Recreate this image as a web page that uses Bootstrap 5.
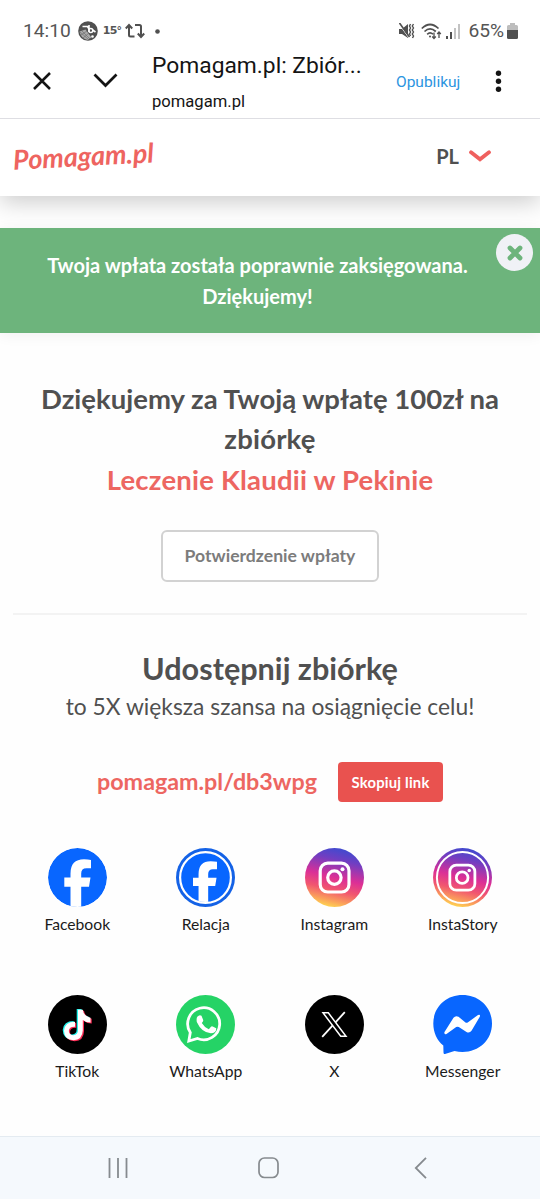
<!DOCTYPE html>
<html lang="pl">
<head>
<meta charset="utf-8">
<meta name="viewport" content="width=device-width, initial-scale=1">
<title>Pomagam.pl: Zbiórka</title>
<link href="https://cdn.jsdelivr.net/npm/bootstrap@5.3.0/dist/css/bootstrap.min.css" rel="stylesheet">
<style>
body{font-family:Lato,sans-serif;color:#505050;background:#fefefe;height:1199px;overflow:hidden}
body>*{flex-shrink:0}
svg{display:block;flex:none}
.phone-ui{font-family:Roboto,sans-serif;z-index:2}
.status{height:49px;padding:14px 22px 0 23px;color:#555;font-size:19.2px;line-height:34px}
.status .temp{font:700 11px/30px "DejaVu Sans",sans-serif;letter-spacing:-.8px}
.appbar{height:70px;padding:0 38px 0 32px;border-bottom:1px solid #dedee3;color:#141414}
.page-title{font-size:22.8px;line-height:30px;width:214px;padding-top:2px}
.page-host{font-size:16.6px;line-height:22px}
.publish{color:#2c95df;font-size:15.500px;line-height:20px}
.site-head{height:77px;padding:0 49px 3px 13px;box-shadow:0 6px 22px rgba(0,0,0,.2);background:#fff;position:relative}
.wordmark{font:italic 700 27px/40px Lato,sans-serif;color:#ee6460;transform:rotate(-3deg)}
.lang{font-size:20px}
.notice{margin-top:32px;height:104.500px;background:#6db47c;color:#fff;font-size:20px;line-height:31.5px;padding:21.500px 25px 0 0;box-shadow:0 2px 14px rgba(0,0,0,.06)}
.notice-x{right:7px;top:6px;width:37px;height:37px;background:#f0f1f6}
.thanks{font-size:27.5px;line-height:40.5px;padding-top:46px}
.h1b,.h1c{letter-spacing:.2px}
.coral{color:#ed6661}
.receipt{width:218px;height:52px;margin-top:30px;border:2px solid #d2d2d2;border-radius:6px;color:#7c7c7c;font-size:17.6px;background:#fff}
.sep{margin:31px 13px 0;height:2px;background:#f3f3f3}
.share-h{font-size:30.6px;line-height:40px;margin-top:34px}
.share-p{font-size:22.8px;line-height:34px}
.link-row{margin-top:39px;height:40px;padding-left:97px;gap:21px}
.short{font-size:23.3px;width:220px;line-height:39px}
.copy{width:105px;height:40px;background:#e9524f;border-radius:4px;font-size:14.8px;letter-spacing:.2px;color:#fff}
.shares{padding:0 13px;margin-top:45.500px}
.share-item{height:147px;color:#1b1b1b;font-size:15.7px;line-height:22px}
.share-item:nth-child(n+5){height:138px}
.share-item svg{margin-bottom:6px}
.sysnav{height:63px;background:#f5f9fd;border-top:1px solid #e4ebf1}
.t{white-space:nowrap}
</style>
</head>
<body class="d-flex flex-column">

<header class="phone-ui bg-white position-relative">
  <div class="status d-flex align-items-start justify-content-between">
    <div class="d-flex align-items-center">
      <span class="t">14:10</span>
      <svg style="margin-left:7px" width="20" height="20" viewBox="0 0 20 20"><circle cx="10" cy="10" r="9.8" fill="#505050"/><path d="M1.500 10.500l6-2 6 8-4 2.500q-7-2-8-8.500z" fill="#aaa"/><path d="M2 11l8 7M4 10l8 8M3 14l6-4M5 17l6-5" stroke="#666" stroke-width=".6"/><path d="M4.500 5.500h5l1.500 2.500M11 4v7M14.500 9l3 2" fill="none" stroke="#fff" stroke-width="1.600"/><circle cx="12.800" cy="9.500" r="2" fill="none" stroke="#fff" stroke-width="1.500"/><circle cx="14.500" cy="15.500" r="1.300" fill="#fff"/></svg>
      <span class="temp t" style="margin-left:5px">15°</span>
      <svg style="margin-left:4px" width="20" height="18" viewBox="0 0 20 18" fill="none" stroke="#505050" stroke-width="2"><path d="M9.500 14.500H5.500Q4 14.500 4 13V4M.8 6.500L4 3l3.200 3.500M10 3h4.500Q16 3 16 4.500V14M12.800 11.500L16 15l3.200-3.500"/></svg>
      <svg style="margin-left:10px" width="5" height="5"><circle cx="2.500" cy="2.500" r="2.300" fill="#505050"/></svg>
    </div>
    <div class="d-flex align-items-center">
      <svg width="16" height="17" viewBox="0 0 16 17"><path d="M0 6h3l6-5v14L3 11H0z" fill="#505050"/><path d="M0 1l10 14" stroke="#fff" stroke-width="1"/><path d="M.5 0l10 14" stroke="#505050" stroke-width="1.600"/><path d="M11.500 1l-1 2 1 2-1 2 1 2-1 2 1 2M14.500 1l-1.200 2 1.200 2-1.200 2 1.200 2-1.200 2 1.200 2-1 2" fill="none" stroke="#505050" stroke-width="1.400"/></svg>
      <svg style="margin-left:6px" width="21" height="17" viewBox="0 0 21 17" fill="none" stroke="#505050" stroke-width="1.700"><path d="M.8 5.500Q9 -2.500 17.500 5.500M3.500 8.500Q9 3.300 14.800 8.500M6.200 11.300Q9 8.500 12 11.200"/><circle cx="9" cy="13.500" r="1" fill="#505050" stroke="none"/><path d="M13 9.500v6M11.200 13.500l1.800 2 1.800-2M18 15V9M16.200 11L18 9l1.800 2" stroke-width="1.300"/></svg>
      <svg style="margin-left:4px" width="14" height="15" viewBox="0 0 14 15"><path d="M0 12h2v3H0zM4 8h2v7H4z" fill="#505050"/><path d="M8 4h2v11H8zM12 0h2v15h-2z" fill="#c3c3c3"/></svg>
      <span class="t" style="margin-left:8px">65%</span>
      <svg style="margin-left:3px" width="11" height="16" viewBox="0 0 11 16"><path d="M3 0h5v2h1.500Q11 2 11 3.500V8H0V3.500Q0 2 1.500 2H3z" fill="#bdbdbd"/><path d="M0 7h11v7.500Q11 16 9.500 16h-8Q0 16 0 14.500z" fill="#505050"/></svg>
    </div>
  </div>
  <div class="appbar d-flex align-items-start">
    <svg style="margin-top:22px" width="20" height="20" viewBox="0 0 20 20"><path d="M2 2l16 16M18 2L2 18" stroke="#141414" stroke-width="2.500"/></svg>
    <svg style="margin:24px 0 0 41px" width="25" height="15" viewBox="0 0 25 15"><path d="M1.500 1.500l11 11 11-11" fill="none" stroke="#141414" stroke-width="2.700"/></svg>
    <div style="margin-left:34px">
      <div class="page-title t"><span>Pomagam.pl: Zbiór...</span></div>
      <div class="page-host t" style="margin-top:10px"><span>pomagam.pl</span></div>
    </div>
    <span class="publish t" style="margin:23px 0 0 30px">Opublikuj</span>
    <svg class="ms-auto" style="margin-top:21px" width="7" height="23" viewBox="0 0 7 23" fill="#141414"><circle cx="3.500" cy="3.300" r="2.700"/><circle cx="3.500" cy="11.300" r="2.700"/><circle cx="3.500" cy="19.300" r="2.700"/></svg>
  </div>
</header>

<nav class="site-head d-flex align-items-center justify-content-between">
  <a class="wordmark text-decoration-none t" href="#">Pomagam.pl</a>
  <div class="d-flex align-items-center lang fw-bold"><span>PL</span>
    <svg style="margin-left:10px" width="22" height="13" viewBox="0 0 22 13"><path d="M2 2.300l9 7 9-7" fill="none" stroke="#ef605e" stroke-width="3.800" stroke-linecap="round"/></svg></div>
</nav>

<section class="notice fw-bold text-center position-relative">
  <div class="t"><span>Twoja wpłata została poprawnie zaksięgowana.</span><br><span>Dziękujemy!</span></div>
  <button class="notice-x btn p-0 border-0 rounded-circle position-absolute d-flex align-items-center justify-content-center" aria-label="Zamknij"><svg width="16" height="16" viewBox="0 0 16 16"><path d="M3 3l10 10M13 3L3 13" stroke="#6db47c" stroke-width="4.800" stroke-linecap="round"/></svg></button>
</section>

<main class="text-center">
  <h1 class="thanks fw-bold mb-0 t"><span>Dziękujemy za Twoją wpłatę 100zł na</span><br><span class="h1b">zbiórkę</span><br><span class="coral h1c">Leczenie Klaudii w Pekinie</span></h1>
  <button class="receipt btn fw-bold p-0 t"><span>Potwierdzenie wpłaty</span></button>
  <div class="sep"></div>
  <h2 class="share-h fw-bold mb-0 t"><span>Udostępnij zbiórkę</span></h2>
  <p class="share-p mb-0 t"><span>to 5X większa szansa na osiągnięcie celu!</span></p>
  <div class="link-row d-flex text-start">
    <div class="short fw-bold coral t"><span>pomagam.pl/db3wpg</span></div>
    <button class="copy btn p-0 fw-bold t"><span>Skopiuj link</span></button>
  </div>
  <svg width="0" height="0" class="position-absolute"><defs>
    <linearGradient id="ig" x1=".62" y1="0" x2=".38" y2="1"><stop offset="0" stop-color="#3d4bd0"/><stop offset=".2" stop-color="#703ec2"/><stop offset=".5" stop-color="#dc2f96"/><stop offset=".7" stop-color="#f1566f"/><stop offset=".87" stop-color="#fa9c5c"/><stop offset="1" stop-color="#ffd84f"/></linearGradient>
    <path id="ff" d="M22.500 59V38.800H16.300V29.600H22.500V25.500Q22.500 11.300 36 11.300Q40 11.300 43 12V20.300H38.500Q33.200 20.300 33.200 25.500V29.600H42.500L41 38.800H33.200V59z"/>
    <g id="cam" fill="none" stroke="#fff" stroke-width="3.200"><rect x="15.200" y="15.200" width="28.800" height="28.800" rx="7.500"/><circle cx="29.400" cy="29.600" r="6.700"/><circle cx="37.500" cy="21.300" r="2" fill="#fff" stroke="none"/></g>
    <path id="note" d="M29.500 14.500H34.300Q35 20.500 42 22.500V27.300Q37.500 27.300 34.300 24.700V35Q34 44.500 25 45Q15.800 44.500 15.500 35.500Q16.300 26.500 26.500 26.500V31.500Q20.500 31.200 20.300 35.700Q20.600 39.800 25 40Q29.400 39.700 29.500 35z"/>
    <clipPath id="disc"><circle cx="29.500" cy="29.500" r="24.500"/></clipPath>
    <clipPath id="rim"><circle cx="29.500" cy="29.500" r="29.500"/></clipPath>
  </defs></svg>
  <div class="shares row g-0 w-100">
    <div class="col-3 share-item d-flex flex-column align-items-center">
      <svg width="59" height="59"><g clip-path="url(#rim)"><circle cx="29.500" cy="29.500" r="29.500" fill="#0866ff"/><use href="#ff" fill="#fff"/></g></svg><span>Facebook</span></div>
    <div class="col-3 share-item d-flex flex-column align-items-center">
      <svg width="59" height="59"><circle cx="29.500" cy="29.500" r="29.500" fill="#1462e6"/><circle cx="29.500" cy="29.500" r="25.400" fill="#0866ff" stroke="#fff" stroke-width="2.200"/><g clip-path="url(#disc)"><use href="#ff" fill="#fff" transform="translate(2.300 3) scale(.9)"/></g></svg><span>Relacja</span></div>
    <div class="col-3 share-item d-flex flex-column align-items-center">
      <svg width="59" height="59"><circle cx="29.500" cy="29.500" r="29.500" fill="url(#ig)"/><use href="#cam"/></svg><span>Instagram</span></div>
    <div class="col-3 share-item d-flex flex-column align-items-center">
      <svg width="59" height="59"><circle cx="29.500" cy="29.500" r="29.500" fill="url(#ig)"/><circle cx="29.500" cy="29.500" r="25.600" fill="none" stroke="#fff" stroke-width="2"/><use href="#cam" transform="translate(3.600 3.900) scale(.87)"/></svg><span>InstaStory</span></div>
    <div class="col-3 share-item d-flex flex-column align-items-center">
      <svg width="59" height="59"><circle cx="29.500" cy="29.500" r="29.500" fill="#000"/><use href="#note" fill="#25f4ee" x="-.8" y="-.4"/><use href="#note" fill="#fe2c55" x="1.700" y="1.200"/><use href="#note" fill="#fff" x=".5" y=".3"/></svg><span>TikTok</span></div>
    <div class="col-3 share-item d-flex flex-column align-items-center">
      <svg width="59" height="59"><circle cx="29.500" cy="29.500" r="29.500" fill="#25d366"/><path d="M14.300 37.500A16 16 0 1 1 21.500 43.500L12.800 46z" fill="none" stroke="#fff" stroke-width="2.800" stroke-linejoin="miter"/><path d="M21.300 21.800Q23.500 19.300 25.500 20.800L27.300 25.300Q27.300 26.500 25.800 28Q28.500 32.500 32.800 34.200L35 31.700Q35.700 31 36.700 31.500L40.200 33.300Q40.500 38 34.800 38.300Q25.500 37.500 20.800 27Q20.200 23.500 21.300 21.800z" fill="#fff"/></svg><span>WhatsApp</span></div>
    <div class="col-3 share-item d-flex flex-column align-items-center">
      <svg width="59" height="59"><circle cx="29.500" cy="29.500" r="29.500" fill="#000"/><path d="M39.800 17.200L17.200 41.800" stroke="#fff" stroke-width="1.800"/><path d="M18 17.800h5.300L41 41.200h-5.300z" fill="#000" stroke="#fff" stroke-width="1.500"/></svg><span>X</span></div>
    <div class="col-3 share-item d-flex flex-column align-items-center">
      <svg width="59" height="59"><path d="M29.500 0C46 0 59 12 59 28.500S46 57 29.500 57Q25.500 57 21.500 56L12 59Q10.500 59.300 10.500 57.500L10.300 50.500C4 45.500 .3 37.500 .3 28.500C.3 12 13 0 29.500 0z" fill="#0866ff"/><path d="M11.500 37L20.500 22.800Q22.500 20.300 25.500 21.800L32.500 27.500Q33.500 28.200 34.700 27.500L45 20Q47.700 19 46.800 21.800L38.500 35.700Q36.500 38.500 33.500 37L25.800 32Q24.500 31.400 23.200 32L13.500 39Q10.700 39.800 11.500 37z" fill="#fff"/></svg><span>Messenger</span></div>
  </div>
</main>

<footer class="sysnav mt-auto d-flex align-items-center">
  <svg style="margin-left:108px" width="20" height="20" viewBox="0 0 20 20"><path d="M1.500 0v20M10 0v20M18.500 0v20" stroke="#868b8f" stroke-width="1.800"/></svg>
  <svg style="margin-left:130px" width="21" height="22" viewBox="0 0 21 22"><rect x="1" y="1" width="19" height="19.500" rx="5.500" fill="none" stroke="#868b8f" stroke-width="1.700"/></svg>
  <svg style="margin-left:135px" width="13" height="22" viewBox="0 0 13 22"><path d="M12 .8L1.800 11 12 21.200" fill="none" stroke="#868b8f" stroke-width="1.800"/></svg>
</footer>
<script src="https://cdn.jsdelivr.net/npm/bootstrap@5.3.0/dist/js/bootstrap.bundle.min.js"></script>
</body>
</html>
